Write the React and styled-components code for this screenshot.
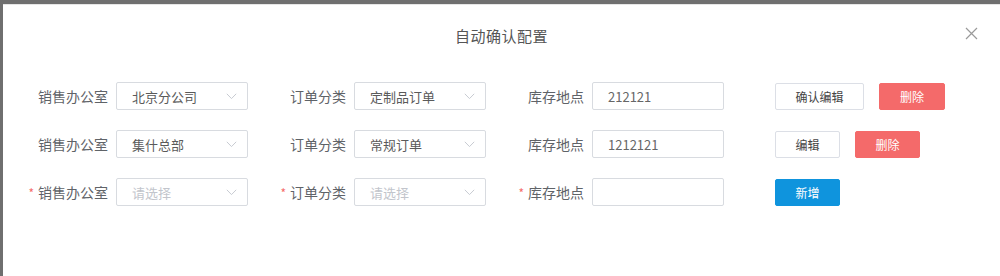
import React from 'react';
import styled, { createGlobalStyle } from 'styled-components';

const GlobalStyle = createGlobalStyle`
  html, body {
    margin: 0;
    padding: 0;
    background: #6f6f6f;
    font-family: "Noto Sans CJK SC", "Noto Sans", "Liberation Sans", sans-serif;
  }
`;

const rows = [
  { office: '北京分公司', type: '定制品订单', place: '212121', edit: '确认编辑', editWidth: 89, delWidth: 66 },
  { office: '集什总部', type: '常规订单', place: '1212121', edit: '编辑', editWidth: 65, delWidth: 65 },
];

const App = () => (
  <>
    <GlobalStyle />
    <Dialog>
      <Header>
        <Title>自动确认配置</Title>
        <Close aria-label="关闭">
          <svg width="13" height="13" viewBox="0 0 13 13">
            <path d="M1 1L12 12M12 1L1 12" stroke="#9a9a9a" strokeWidth="1.2" fill="none" />
          </svg>
        </Close>
      </Header>
      <Body>
        {rows.map((r, i) => (
          <Row key={i}>
            <Field label="销售办公室">
              <Select value={r.office} />
            </Field>
            <Field label="订单分类">
              <Select value={r.type} />
            </Field>
            <Field label="库存地点">
              <Input>{r.place}</Input>
            </Field>
            <Actions>
              <Button width={r.editWidth}>{r.edit}</Button>
              <Button width={r.delWidth} kind="danger">删除</Button>
            </Actions>
          </Row>
        ))}
        <Row>
          <Field label="销售办公室" required>
            <Select />
          </Field>
          <Field label="订单分类" required>
            <Select />
          </Field>
          <Field label="库存地点" required>
            <Input />
          </Field>
          <Actions>
            <Button width={65} kind="primary">新增</Button>
          </Actions>
        </Row>
      </Body>
    </Dialog>
  </>
);

const Field = ({ label, required, children }) => (
  <FieldWrap>
    <Label>
      {required && <Star>*</Star>}
      {label}
    </Label>
    {children}
  </FieldWrap>
);

const Select = ({ value }) => (
  <SelectBox>
    <SelectText placeholder={!value}>{value || '请选择'}</SelectText>
    <svg width="11" height="7" viewBox="0 0 11 7">
      <path d="M0.8 0.8L5.5 5.6L10.2 0.8" stroke="#c8cbd2" strokeWidth="1" fill="none" />
    </svg>
  </SelectBox>
);

const Dialog = styled.div`
  margin: 4px 0 0 3px;
  height: 272px;
  background: #fff;
  border-top: 1px solid #e6e6e6;
  box-sizing: border-box;
`;

const Header = styled.div`
  position: relative;
  height: 63px;
  box-sizing: border-box;
  padding-top: 20px;
  display: flex;
  justify-content: center;
`;

const Title = styled.div`
  font-size: 15px;
  line-height: 22px;
  color: #555;
  letter-spacing: 0.5px;
`;

const Close = styled.div`
  position: absolute;
  right: 22px;
  top: 22px;
  display: flex;
`;

const Body = styled.div`
  padding: 14px 0 0 17px;
  display: flex;
  flex-direction: column;
  gap: 20px;
`;

const Row = styled.div`
  display: flex;
  align-items: center;
  height: 28px;
  margin-top: ${(p) => p.offset || 0}px;
`;

const FieldWrap = styled.div`
  display: flex;
  align-items: center;
  margin-right: 10px;
`;

const Label = styled.div`
  width: 96px;
  box-sizing: border-box;
  padding-right: 8px;
  text-align: right;
  font-size: 14px;
  color: #5f6368;
  white-space: nowrap;
`;

const Star = styled.span`
  color: #f56c6c;
  margin-right: 4px;
  font-size: 12px;
`;

const SelectBox = styled.div`
  width: 132px;
  height: 28px;
  box-sizing: border-box;
  border: 1px solid #d8dbe0;
  border-radius: 2px;
  display: flex;
  align-items: center;
  justify-content: space-between;
  padding: 0 10px 0 15px;
`;

const SelectText = styled.span`
  font-size: 13px;
  color: ${(p) => (p.placeholder ? '#c2c5cc' : '#5a5a5a')};
`;

const Input = styled.div`
  width: 132px;
  height: 28px;
  box-sizing: border-box;
  border: 1px solid #d8dbe0;
  border-radius: 2px;
  display: flex;
  align-items: center;
  padding-left: 15px;
  font-size: 13px;
  color: #666;
`;

const Actions = styled.div`
  display: flex;
  gap: 15px;
  margin-left: 41px;
`;

const colors = {
  default: { bg: '#fff', border: '#dcdfe6', color: '#444' },
  danger: { bg: '#f46a6a', border: '#f46a6a', color: '#fff' },
  primary: { bg: '#0f94dd', border: '#0f94dd', color: '#fff' },
};

const Button = styled.div`
  width: ${(p) => p.width}px;
  height: 27px;
  box-sizing: border-box;
  border: 1px solid ${(p) => colors[p.kind || 'default'].border};
  background: ${(p) => colors[p.kind || 'default'].bg};
  color: ${(p) => colors[p.kind || 'default'].color};
  border-radius: 2px;
  font-size: 12px;
  display: flex;
  align-items: center;
  justify-content: center;
`;

export default App;
